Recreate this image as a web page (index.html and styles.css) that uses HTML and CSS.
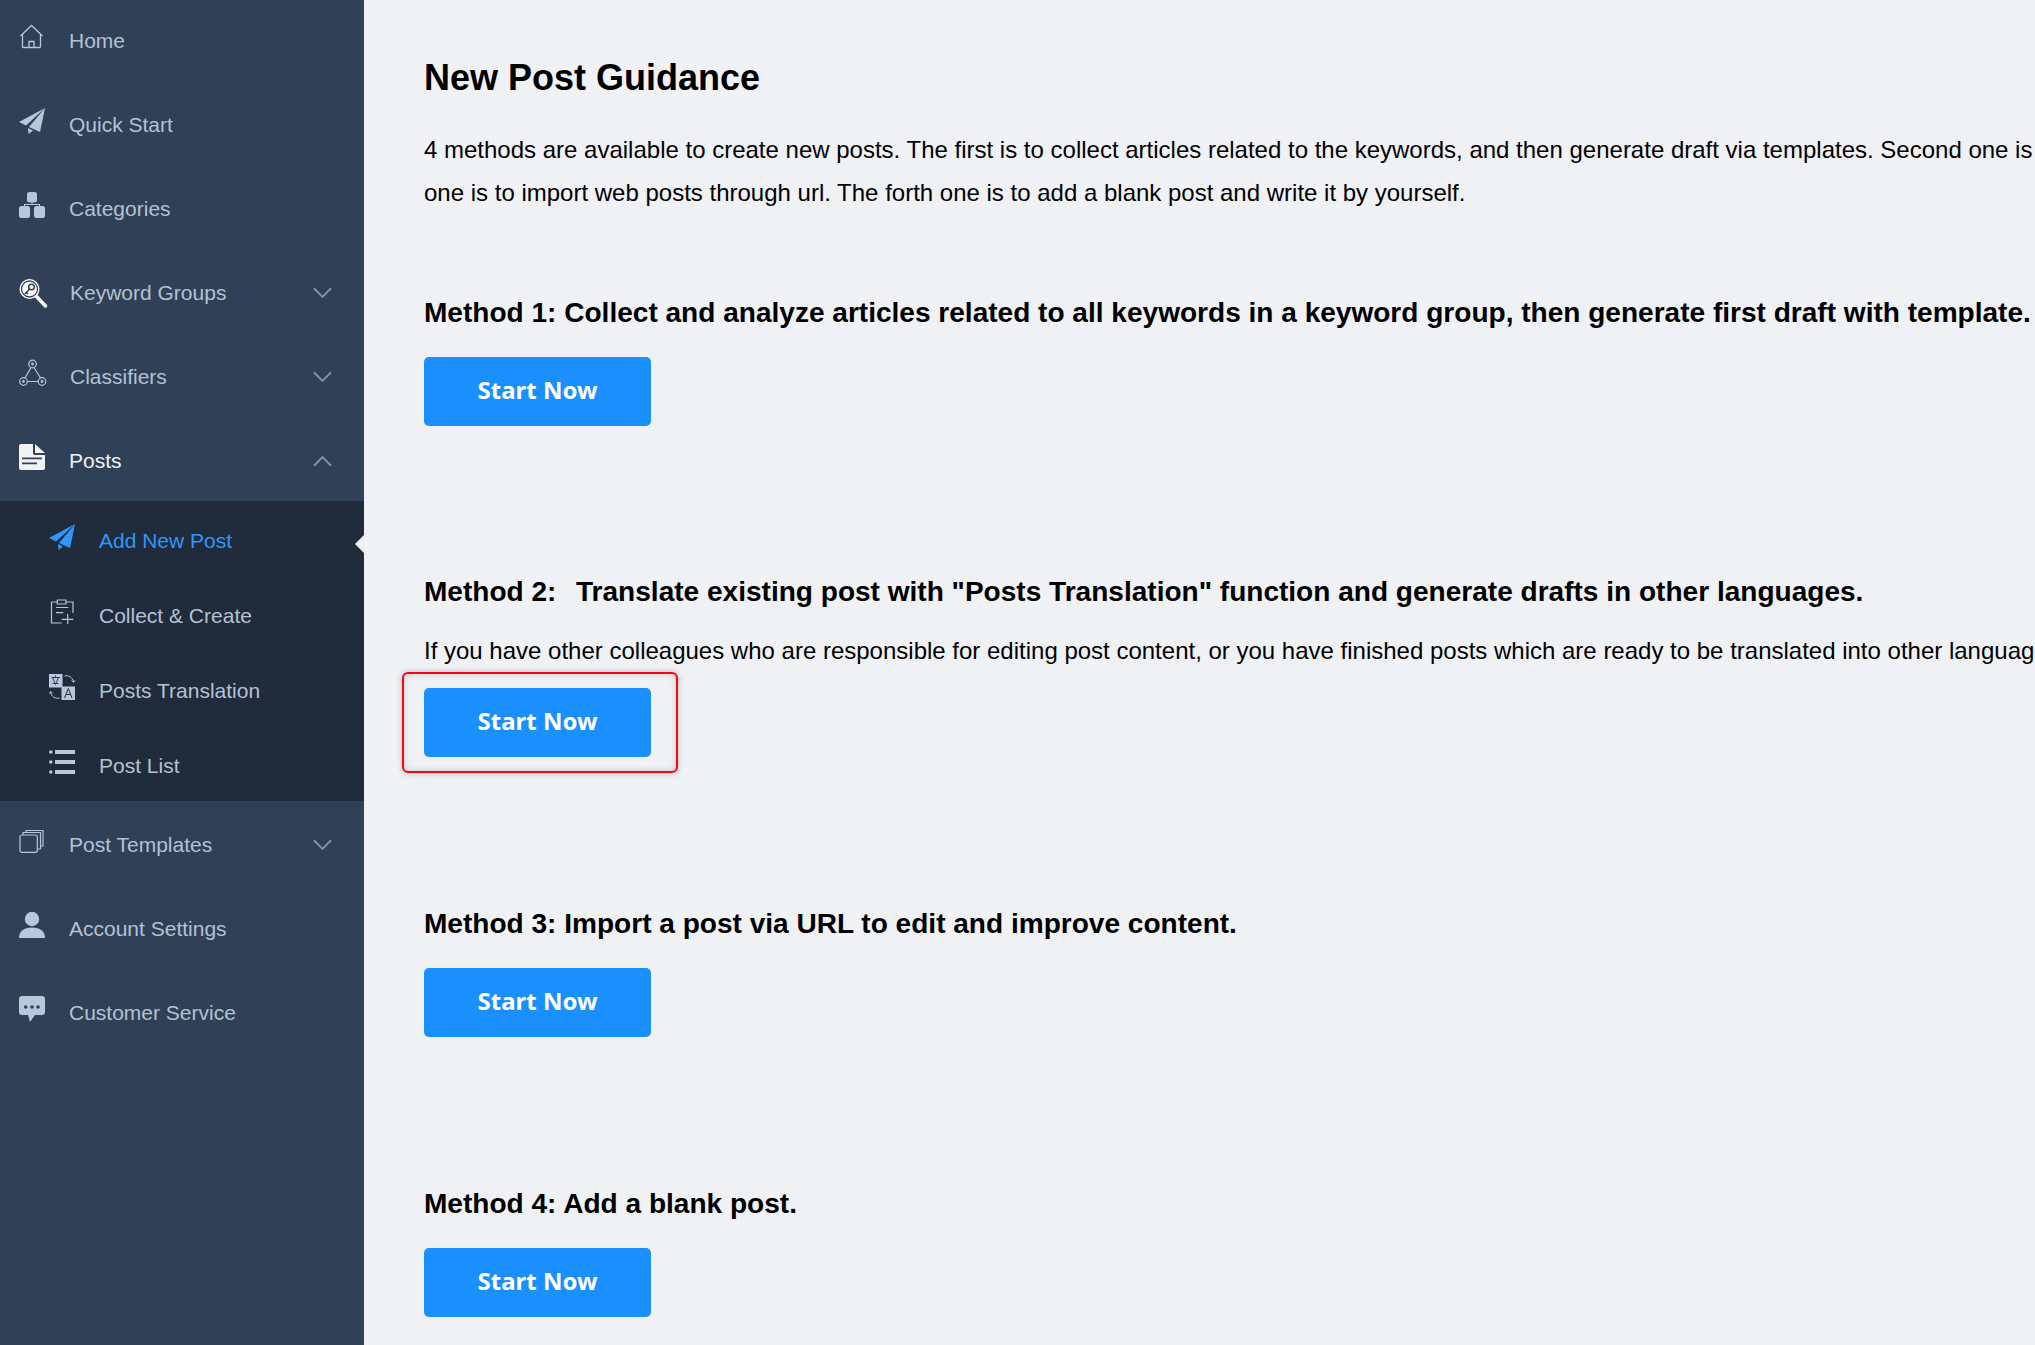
FILE: index.html
```html
<!DOCTYPE html>
<html lang="en">
<head>
<meta charset="utf-8">
<title>New Post Guidance</title>
<link rel="stylesheet" href="styles.css">
</head>
<body>
<div class="app">
  <nav class="sidebar">
    <a class="item"><svg class="ico" viewBox="0 0 26 26" fill="none" stroke="#b8c7d9" stroke-width="1.3"><path d="M1.500 12 12.500 1.500 23.500 12M3.500 10.500v12a1 1 0 0 0 1 1h16a1 1 0 0 0 1-1v-12M10 23.500v-6h5v6"/></svg><span class="label">Home</span></a>
    <a class="item"><svg class="ico" viewBox="0 0 26 26" fill="#b8c7d9"><path d="M26 0 0 14l7 3.500zM26 0 10 19l11 5zM9 20l.5 6 4.500-3.500z"/></svg><span class="label">Quick Start</span></a>
    <a class="item"><svg class="ico" viewBox="0 0 26 26" fill="#b8c7d9"><rect x="8" y="0" width="10" height="10.500" rx="2.500"/><rect x="0" y="14" width="11" height="12" rx="2.500"/><rect x="15" y="14" width="11" height="12" rx="2.500"/><path d="M12.500 10h1v2H21v3h-1v-2H6v2H5v-3h7.500z"/></svg><span class="label">Categories</span></a>
    <a class="item"><svg class="ico big key" viewBox="0 0 28 28"><path d="m17 17 9.500 10" stroke="#fff" stroke-width="3.500" stroke-linecap="round"/><circle cx="10.500" cy="10" r="10" fill="#fff"/><circle cx="10.500" cy="10" r="8" fill="#fff" stroke="#304057" stroke-width="1.300"/><circle cx="12.500" cy="8" r="2.800" fill="none" stroke="#304057" stroke-width="1.500"/><path d="m10.500 10-4.500 5M7.500 13.500l1.500 1.500" stroke="#304057" stroke-width="1.500" fill="none"/></svg><span class="label wide">Keyword Groups</span><svg class="chev" viewBox="0 0 20 12"><path d="m1 1 9 9 9-9"/></svg></a>
    <a class="item"><svg class="ico big" viewBox="0 0 28 28" fill="none" stroke="#b8c7d9" stroke-width="1.200"><circle cx="13.500" cy="5" r="3.800"/><circle cx="4.500" cy="22.500" r="3.800"/><circle cx="23" cy="22.500" r="3.800"/><circle cx="13.500" cy="5" r=".8"/><circle cx="4.500" cy="22.500" r=".8"/><circle cx="23" cy="22.500" r=".8"/><path d="M12 8.500 6 19M15 8.500 21.500 19M8.300 22.500h11"/></svg><span class="label wide">Classifiers</span><svg class="chev" viewBox="0 0 20 12"><path d="m1 1 9 9 9-9"/></svg></a>
    <a class="item open"><svg class="ico" viewBox="0 0 26 26"><path fill="#f0f2f5" d="M2 0h12v9a2 2 0 0 0 2 2h10v13a2 2 0 0 1-2 2H2a2 2 0 0 1-2-2V2a2 2 0 0 1 2-2zM16 0l10 9H16z"/><path fill="#304057" d="M3 13.500h20v1.800H3zM3 18.500h15v1.800H3z"/></svg><span class="label">Posts</span><svg class="chev" viewBox="0 0 20 12"><path d="m1 11 9-9 9 9"/></svg></a>
    <div class="sub">
      <a class="subitem active"><svg class="ico" viewBox="0 0 26 26" fill="#2f96fb"><path d="M26 0 0 14l7 3.500zM26 0 10 19l11 5zM9 20l.5 6 4.500-3.500z"/></svg><span class="label">Add New Post</span></a>
      <a class="subitem"><svg class="ico" viewBox="0 0 26 26" fill="none" stroke="#b8c7d9" stroke-width="1.200"><path d="M8.300 3H2.500v21h10.200M17 3h7v11M8.300 1H17v4H8.300zM7 8.500h12.300M7 13.700h7.300M18.700 15v10M12.700 20.300h11.600"/></svg><span class="label">Collect &amp; Create</span></a>
      <a class="subitem"><svg class="ico" viewBox="0 0 26 26" fill="none"><rect width="13.500" height="13.500" fill="#b8c7d9"/><rect x="12.500" y="12.500" width="13.500" height="13.500" fill="#b8c7d9"/><path d="M2.500 3.500h8.500M3.500 3.500l3 7M9.500 3.500l-3 7M3.500 9.500h6M6.500 1.500v2" stroke="#304057"/><path d="m15.500 24 3.800-9.500 3.700 9.500M17 20.500h5" stroke="#202c3b"/><path d="M15.500 2c4-1 8 1 9 6M22.700 6.500 24.500 8.500 26 6.300M10.500 24c-4 1-8-1-9-6M.5 19.500 1.500 17.500 3.500 19" stroke="#b8c7d9"/></svg><span class="label">Posts Translation</span></a>
      <a class="subitem"><svg class="ico" viewBox="0 0 26 26" fill="#b8c7d9"><circle cx="1.800" cy="3" r="1.800"/><circle cx="1.800" cy="13" r="1.800"/><circle cx="1.800" cy="23" r="1.800"/><rect x="6" y="1" width="20" height="4"/><rect x="6" y="11" width="20" height="4"/><rect x="6" y="21" width="20" height="4"/></svg><span class="label">Post List</span></a>
    </div>
    <a class="item after-sub"><svg class="ico" viewBox="0 0 26 26" fill="none" stroke="#b8c7d9" stroke-width="1.200"><rect x="1" y="7" width="17.300" height="17.300" rx="2"/><path d="M4 7V4.500h17.500V21h-3.200M7 4.500v-2h17V18h-2.500"/></svg><span class="label">Post Templates</span><svg class="chev" viewBox="0 0 20 12"><path d="m1 1 9 9 9-9"/></svg></a>
    <a class="item"><svg class="ico" viewBox="0 0 26 26" fill="#b8c7d9"><circle cx="13" cy="7" r="7.200"/><path d="M0 26c0-7 5-10.500 13-10.500S26 19 26 26z"/></svg><span class="label">Account Settings</span></a>
    <a class="item"><svg class="ico" viewBox="0 0 26 26"><path fill="#b8c7d9" d="M3 0h20a3 3 0 0 1 3 3v13a3 3 0 0 1-3 3h-7l-5 7-2-7H3a3 3 0 0 1-3-3V3a3 3 0 0 1 3-3z"/><circle cx="6.700" cy="11" r="1.800" fill="#304057"/><circle cx="13" cy="11" r="1.800" fill="#304057"/><circle cx="19" cy="11" r="1.800" fill="#304057"/></svg><span class="label">Customer Service</span></a>
  </nav>
  <main class="content">
    <h1 class="title">New Post Guidance</h1>
    <p class="intro">4 methods are available to create new posts. The first is to collect articles related to the keywords, and then generate draft via templates. Second one is to translate existing posts into other languages. The third</p>
    <p class="intro">one is to import web posts through url. The forth one is to add a blank post and write it by yourself.</p>
    <section class="method m1">
      <h2 class="mtitle">Method 1: Collect and analyze articles related to all keywords in a keyword group, then generate first draft with template.</h2>
      <a class="btn">Start Now</a>
    </section>
    <section class="method m2">
      <h2 class="mtitle">Method 2:<span class="gap">&nbsp;</span> Translate existing post with "Posts Translation" function and generate drafts in other languages.</h2>
      <p class="note">If you have other colleagues who are responsible for editing post content, or you have finished posts which are ready to be translated into other languages.</p>
      <a class="btn marked">Start Now</a>
    </section>
    <section class="method m3">
      <h2 class="mtitle">Method 3: Import a post via URL to edit and improve content.</h2>
      <a class="btn">Start Now</a>
    </section>
    <section class="method m4">
      <h2 class="mtitle">Method 4: Add a blank post.</h2>
      <a class="btn">Start Now</a>
    </section>
  </main>
</div>
</body>
</html>
```
FILE: styles.css
```css
*, *::before, *::after { box-sizing: border-box; }
html, body { margin: 0; height: 100%; overflow: hidden; }
body { font-family: "Liberation Sans", Arial, sans-serif; background: #eff1f5; color: #000; }
.app { display: flex; height: 1345px; }
.sidebar { width: 364px; flex: none; background: #304057; margin-top: -1px; }
.item { height: 84px; display: flex; align-items: center; padding: 0 32px 0 19px; color: #b3c2d3; font-size: 21px; }
.item.open { color: #f0f2f5; margin-bottom: -2px; }
.item.after-sub { margin-top: 2px; }
.ico { width: 26px; height: 26px; flex: none; margin-top: -8px; overflow: visible; }
.ico.big { width: 28px; height: 28px; }
.ico.key { margin-top: 0; }
.label { margin-left: 24px; }
.label.wide { margin-left: 23px; }
.chev { width: 19px; height: 12px; margin-left: auto; fill: none; stroke: #8492a3; stroke-width: 2; }
.sub { background: #202c3b; height: 300px; padding-top: 2px; }
.subitem { height: 75px; display: flex; align-items: center; padding-left: 49px; color: #b3c2d3; font-size: 21px; position: relative; }
.subitem .ico { margin-top: -7px; }
.subitem .label { margin-left: 24px; }
.subitem.active { color: #2f96fb; }
.subitem.active::after { content: ""; position: absolute; right: 0; top: 32px; border: 9px solid transparent; border-right-color: #eff1f5; border-left-width: 0; }
.content { flex: 1; min-width: 0; overflow: hidden; padding: 53px 0 0 60px; }
.title { margin: 0 0 25px; font-size: 36px; line-height: 50px; font-weight: 700; white-space: nowrap; }
.intro { margin: 0; font-size: 24px; line-height: 43px; white-space: nowrap; }
.method { display: flex; flex-direction: column; align-items: flex-start; }
.mtitle { margin: 0 0 24px; font-size: 28.05px; line-height: 40px; font-weight: 700; white-space: nowrap; }
.gap { margin-right: 4px; }
.note { margin: -5px 0 17px; font-size: 24px; line-height: 40px; white-space: nowrap; }
.m1 { margin-top: 79px; }
.m2 { margin-top: 146px; }
.m3 { margin-top: 147px; }
.m4 { margin-top: 147px; }
.btn { width: 227px; height: 69px; background: #1a90ff; border-radius: 5px; color: #fff; font-family: "Noto Sans", sans-serif; font-size: 24px; font-weight: 700; display: flex; align-items: center; justify-content: center; position: relative; padding-bottom: 5px; }
.marked::after { content: ""; position: absolute; left: -22px; top: -16px; width: 276px; height: 101px; border: 2px solid #f01; border-radius: 6px; box-shadow: 0 0 6px rgba(0,0,0,.22), inset 0 0 6px rgba(0,0,0,.18); }
```
